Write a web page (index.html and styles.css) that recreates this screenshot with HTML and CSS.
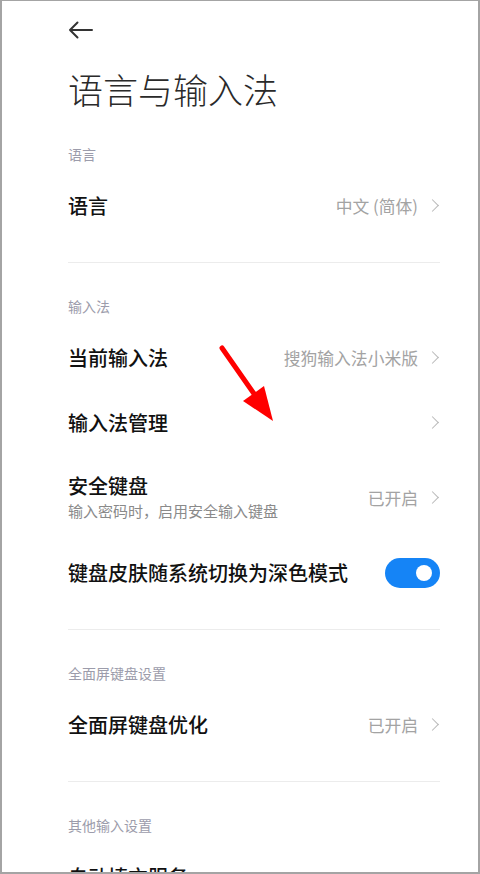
FILE: index.html
```html
<!DOCTYPE html>
<html lang="zh-CN">
<head>
<meta charset="utf-8">
<title>语言与输入法</title>
<link rel="stylesheet" href="styles.css">
</head>
<body>
<div class="screen">
  <div class="topbar">
    <svg class="back" width="26" height="18" viewBox="0 0 26 18"><path d="M2 9 H24 M9.5 1.5 L2 9 L9.5 16.5" fill="none" stroke="#333" stroke-width="2" stroke-linecap="round" stroke-linejoin="round"/></svg>
  </div>
  <h1 class="title">语言与输入法</h1>

  <div class="group first">
    <div class="label">语言</div>
    <div class="row">
      <div class="row-title">语言</div>
      <div class="value">中文 (简体)<span class="chev"></span></div>
    </div>
  </div>
  <div class="divider"></div>

  <div class="group">
    <div class="label">输入法</div>
    <div class="row">
      <div class="row-title">当前输入法</div>
      <div class="value">搜狗输入法小米版<span class="chev"></span></div>
    </div>
    <div class="row">
      <div class="row-title">输入法管理</div>
      <div class="value"><span class="chev"></span></div>
    </div>
    <div class="row tall">
      <div class="row-text">
        <div class="row-title">安全键盘</div>
        <div class="sub">输入密码时，启用安全输入键盘</div>
      </div>
      <div class="value">已开启<span class="chev"></span></div>
    </div>
    <div class="row">
      <div class="row-title">键盘皮肤随系统切换为深色模式</div>
      <div class="toggle"><span class="knob"></span></div>
    </div>
  </div>
  <div class="divider"></div>

  <div class="group">
    <div class="label">全面屏键盘设置</div>
    <div class="row">
      <div class="row-title">全面屏键盘优化</div>
      <div class="value">已开启<span class="chev"></span></div>
    </div>
  </div>
  <div class="divider"></div>

  <div class="group">
    <div class="label">其他输入设置</div>
    <div class="row">
      <div class="row-title">自动填充服务</div>
    </div>
  </div>

  <svg class="annot" width="480" height="874" viewBox="0 0 480 874">
    <line x1="222" y1="348" x2="257" y2="398" stroke="#ff0000" stroke-width="5" stroke-linecap="round"/>
    <polygon points="243,401 264,386 273,421" fill="#ff0000"/>
  </svg>
</div>
</body>
</html>
```

FILE: styles.css
```css
html, body {
  margin: 0;
  padding: 0;
  background: #ffffff;
}
.screen {
  position: relative;
  width: 480px;
  height: 874px;
  box-sizing: border-box;
  border: 2px solid #a4a4a4;
  border-top-width: 1px;
  overflow: hidden;
  padding: 0 38px 0 66px;
  font-family: "Noto Sans CJK SC", "Noto Sans", sans-serif;
  color: #111;
}
.topbar {
  height: 58px;
  display: flex;
  align-items: center;
}
.back {
  display: block;
  margin-left: 0;
}
.title {
  margin: 0;
  height: 60px;
  line-height: 60px;
  font-size: 35px;
  font-weight: 300;
  color: #2a2a2a;
  letter-spacing: 0;
}
.group {
  padding-top: 33px;
  padding-bottom: 24px;
}
.group.first {
  padding-top: 25px;
}
.label {
  height: 20px;
  line-height: 20px;
  font-size: 14px;
  color: #9c9cab;
  margin-bottom: 9px;
}
.row {
  height: 65px;
  display: flex;
  align-items: center;
  justify-content: space-between;
}
.row.tall {
  height: 85px;
}
.row-title {
  font-size: 20px;
  line-height: 26px;
  font-weight: 500;
  color: #111;
}
.sub {
  font-size: 15px;
  line-height: 24px;
  color: #8a8a8a;
}
.value {
  display: flex;
  align-items: center;
  font-size: 16.8px;
  color: #a3a3a3;
}
.chev {
  display: inline-block;
  width: 8px;
  height: 8px;
  border-top: 1.6px solid #b8b8b8;
  border-right: 1.6px solid #b8b8b8;
  transform: rotate(45deg);
  margin-left: 10px;
  margin-right: 3px;
}
.divider {
  height: 1px;
  background: #ececec;
}
.toggle {
  position: relative;
  width: 55px;
  height: 30px;
  border-radius: 15px;
  background: #1584f6;
}
.knob {
  position: absolute;
  right: 8px;
  top: 7px;
  width: 16px;
  height: 16px;
  border-radius: 50%;
  background: #fff;
}
.annot {
  position: absolute;
  left: -2px;
  top: -1px;
  pointer-events: none;
}
```
